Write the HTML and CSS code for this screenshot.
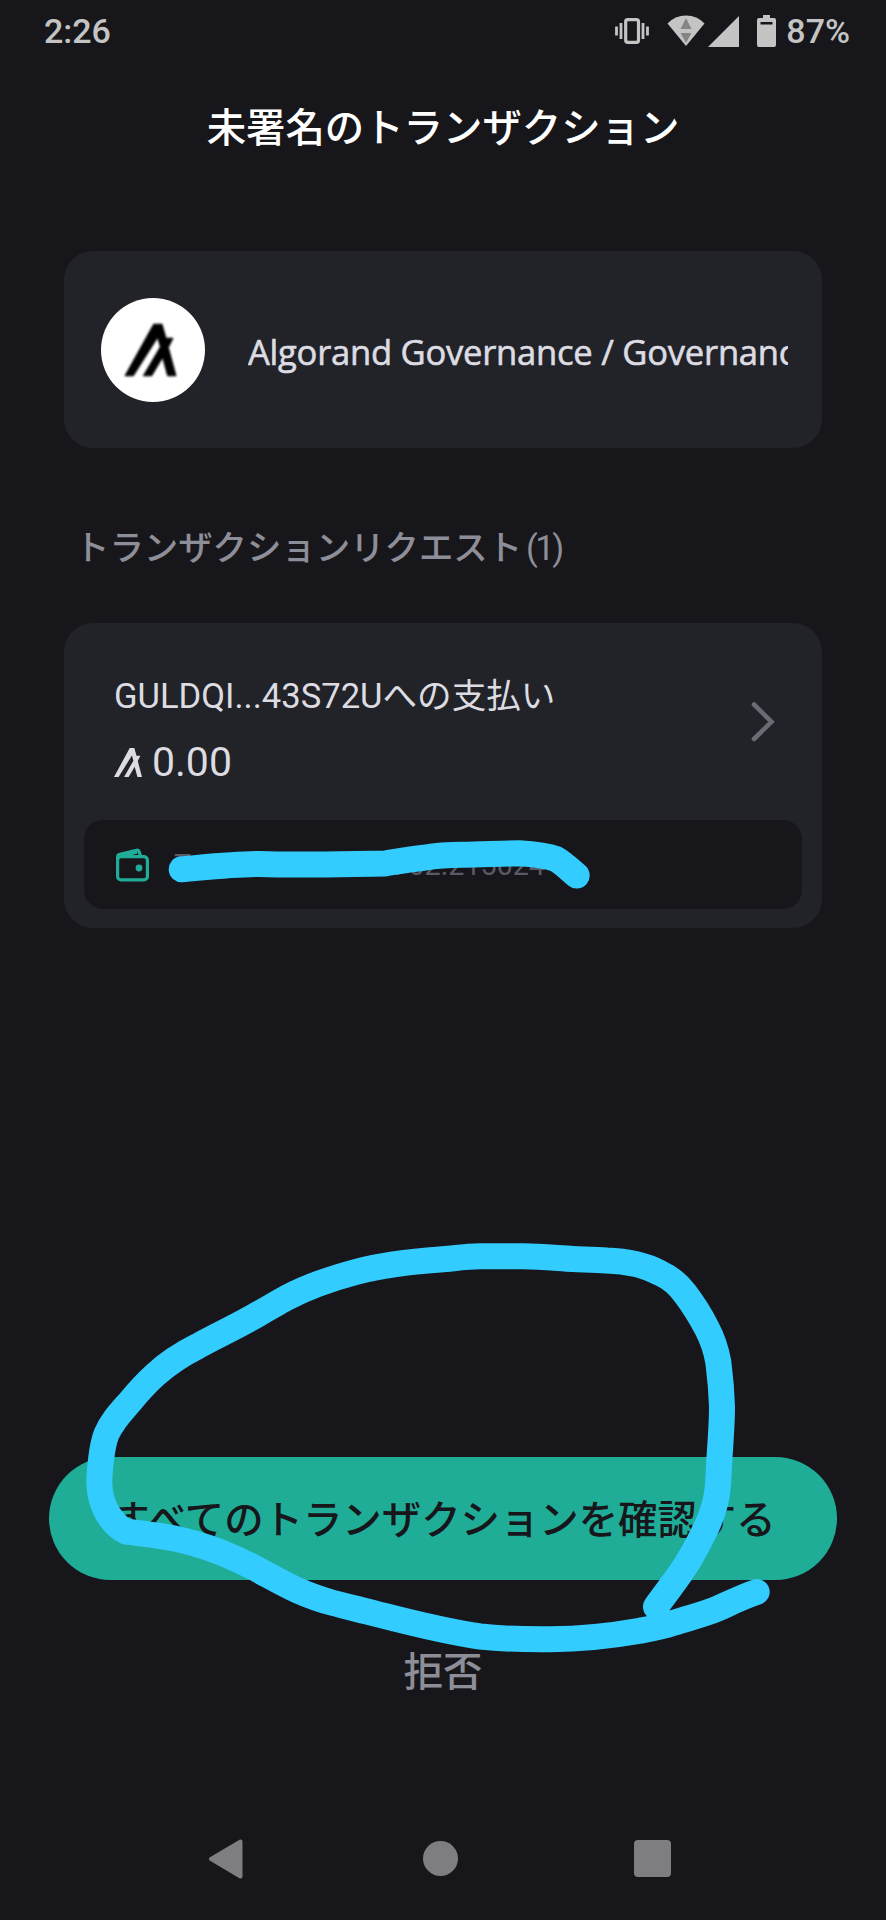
FILE: index.html
```html
<!DOCTYPE html>
<html lang="ja">
<head>
<meta charset="UTF-8" />
<meta name="viewport" content="width=device-width, initial-scale=1" />
<title>未署名のトランザクション</title>
<link rel="stylesheet" href="styles.css">
</head>
<body>
  <div class="status-bar">
    <span>2:26</span>
    <div class="status-icons">
      <svg class="icon-vibrate" width="34" height="26" viewBox="0 0 34 26">
        <path d="M1.5 8.500v9M6 5v16M28 5v16M32.500 8.500v9" stroke="#c4c4c4" stroke-width="2.800"/>
        <rect x="10.700" y="1.700" width="12.800" height="22.600" rx="2" fill="none" stroke="#c4c4c4" stroke-width="3.200"/>
      </svg>
      <svg class="icon-wifi" width="38" height="32" viewBox="0 0 38 32">
        <path d="M.5 8.500Q8 .5 19 .5T37.500 8.500L19 31z" fill="#c4c4c4"/>
        <path d="M19 3l5.500 11h-11zM13.500 18h11L19 28z" fill="#858585"/>
      </svg>
      <svg class="icon-signal" width="31" height="31" viewBox="0 0 31 31">
        <path d="M0 31L31 0v31z" fill="#c4c4c4"/>
      </svg>
      <svg class="icon-battery" width="19" height="32" viewBox="0 0 19 32">
        <path d="M6 0h7v3h4a2 2 0 0 1 2 2v25a2 2 0 0 1-2 2H2a2 2 0 0 1-2-2V5a2 2 0 0 1 2-2h4z" fill="#c4c4c4"/>
        <path d="M3.500 7h12v2.500h-12z" fill="#17171b"/>
      </svg>
      <span>87%</span>
    </div>
  </div>

  <h1 class="title">未署名のトランザクション</h1>

  <main class="content">
    <div class="dapp-card">
      <div class="dapp-logo">
        <svg width="51" height="52" viewBox="0 0 153 155">
          <path d="M86 0h25l12 42h21l-14 28 23 85h-25l-15-55-33 55h-25l51-87-8-28-73 115H0z" stroke="#000" stroke-width="3"/>
        </svg>
      </div>
      <div class="dapp-name">Algorand Governance / Governance</div>
    </div>

    <h2 class="section-title">トランザクションリクエスト<span class="count">(1)</span></h2>

    <div class="tx-card">
      <div class="tx-main">
        <div class="tx-info">
          <div class="tx-title">GULDQI...43S72Uへの支払い</div>
          <div class="tx-amount">
            <svg width="28" height="29" viewBox="0 0 153 155" preserveAspectRatio="none">
              <path d="M86 0h25l12 42h21l-14 28 23 85h-25l-15-55-33 55h-25l51-87-8-28-73 115H0z" fill="#dcdce2"/>
            </svg>
            <span>0.00</span>
          </div>
        </div>
        <svg class="chevron" width="24" height="42" viewBox="0 0 24 42">
          <path d="M3 3.500l17.500 17.300L3 38" fill="none" stroke="#6b6b76" stroke-width="4.600" stroke-linecap="round"/>
        </svg>
      </div>
      <div class="account">
        <svg width="34" height="34" viewBox="0 0 34 34" fill="none" stroke="#1fad98" stroke-width="3.200">
          <rect x="2.600" y="8.600" width="29.800" height="23.300" rx="3.500"/>
          <path d="M2.600 11V8.500q0-1.500 1.500-2L21.500 2.300q2-.6 2.700 1.400l1.300 4.500M8 8l14-4"/>
          <circle cx="24" cy="20" r="3.400" fill="#1fad98" stroke="none"/>
        </svg>
        <div class="account-text">
          <span>T</span>
          <span>702.215024</span>
        </div>
      </div>
    </div>
  </main>

  <div class="actions">
    <button class="btn-confirm">すべてのトランザクションを確認する</button>
    <button class="btn-reject">拒否</button>
  </div>

  <div class="nav-bar">
    <svg width="36" height="40" viewBox="0 0 36 40">
      <path d="M3 20L32.500 2.500v35z" fill="#7e7e80" stroke="#7e7e80" stroke-width="4" stroke-linejoin="round"/>
    </svg>
    <div class="nav-home"></div>
    <div class="nav-recent"></div>
  </div>

  <!-- marker strokes -->
  <svg class="marker" width="886" height="1920" viewBox="0 0 886 1920">
    <path d="M181.700 869.300C208 867 234 864 260 864C300 865.500 345 864 385 863.500C400 861 410 859 424 857.700C437 855.500 449 854.700 462 854.700C481 854.700 500 853.300 519 853.300C531 854 545 855 556 859C563 863 569 869 576.700 875.500"/>
    <path d="M656 1606.700C667 1591 679 1577 688 1561.700C696 1549 701 1538 706.700 1526.700C712 1515 716 1503 717.500 1490C718.500 1480 718.700 1470 719.300 1460C720.500 1442 722 1424 722 1406.700C721.500 1391 720 1375 718.300 1362C716 1349 712 1338 706.700 1328C700 1315 693 1304 685 1293.500C678 1284 671 1278 660 1273C644 1264.500 626 1261 606.700 1260.500C595 1259.500 584 1259.500 573 1259C556 1258 540 1256.300 523 1256.300H480C466 1256.500 453 1258.500 440 1259.500C412 1261.500 384 1264.500 356.700 1271.700C333 1278 309 1286 286.700 1297.700C277 1303 269 1308 260 1313C238 1326 216 1336 198 1346C180 1355 167 1364 155 1375C145 1384 138 1392 130 1401.700C121 1412 112 1421 106.500 1434C103 1443 102 1451 101 1460C100 1468 99.300 1475 99.300 1483C99.500 1494 102 1503 106.700 1511.700C112 1521 118 1528 126.700 1531.700C142 1533.500 158 1535.500 173.300 1538.300C189 1541.500 204 1546 220 1552C231 1556.500 242 1561.500 253.300 1567.300C268 1575 282 1583 296.700 1590C308 1595 320 1599.500 333.300 1603C348 1607 362 1610 376.700 1614C410 1622.500 444 1631.500 480 1636.500C503 1639 527 1639.500 550 1639.300C580 1639 610 1636 640 1630.700C652 1628.500 663 1626.500 673 1623C688 1618 702 1615 716.700 1609C730 1603 743 1596.500 756.700 1592"/>
  </svg>
</body>
</html>
```
FILE: styles.css
```css
* {
  margin: 0; padding: 0; box-sizing: border-box;
}
body {
  position: relative;
  width: 886px;
  height: 1920px;
  overflow: hidden;
  display: flex;
  flex-direction: column;
  background: #17171b;
  color: #dcdce2;
  font-family: Roboto, "Noto Sans CJK JP", sans-serif;
}
svg {
  display: block;
  flex-shrink: 0;
}
.status-bar {
  height: 62px;
  padding: 0 36px 0 44px;
  display: flex;
  justify-content: space-between;
  align-items: center;
  font-size: 34px;
  font-weight: 500;
  line-height: 62px;
  color: #c4c4c4;
}
.status-icons {
  display: flex;
  align-items: center;
}
.icon-wifi {
  margin-left: 18px;
}
.icon-signal {
  margin-left: 3px;
}
.icon-battery {
  margin-left: 18px;
  margin-right: 10px;
}
.title {
  height: 130px;
  text-align: center;
  color: #fff;
  font-family: "Noto Sans CJK JP", sans-serif;
  font-size: 39.4px;
  font-weight: 500;
  line-height: 126px;
}
.content {
  padding: 59px 64px 0;
}
.dapp-card {
  height: 197px;
  padding: 0 34px 0 37px;
  display: flex;
  align-items: center;
  gap: 43px;
  background: #222328;
  border-radius: 29px;
}
.dapp-logo {
  width: 104px;
  height: 104px;
  padding-right: 6px;
  flex-shrink: 0;
  display: flex;
  align-items: center;
  justify-content: center;
  background: #fff;
  border-radius: 50%;
}
.dapp-logo svg {
  overflow: visible;
  filter: blur(1.2px);
}
.dapp-name {
  flex: 1;
  overflow: hidden;
  white-space: nowrap;
  font-family: "Open Sans", sans-serif;
  font-size: 34.6px;
  font-weight: 500;
  letter-spacing: -0.25px;
  line-height: 60px;
  padding-top: 4px;
  -webkit-text-stroke: 0.6px #dcdce2;
}
.section-title {
  height: 175px;
  padding: 0 11px;
  color: #8e8e98;
  font-family: "Noto Sans CJK JP", sans-serif;
  font-size: 34.4px;
  font-weight: 500;
  line-height: 195px;
}
.section-title .count {
  margin-left: 4px;
  font-family: Roboto, sans-serif;
  font-weight: 400;
  letter-spacing: -2.5px;
}
.tx-card {
  height: 305px;
  padding: 0 20px 19px;
  display: flex;
  flex-direction: column;
  background: #222328;
  border-radius: 29px;
}
.tx-main {
  flex: 1;
  padding: 0 27px 0 30px;
  display: flex;
  justify-content: space-between;
  align-items: center;
}
.tx-info {
  padding-top: 15px;
}
.tx-title {
  font-size: 34.6px;
  line-height: 50px;
}
.tx-amount {
  display: flex;
  align-items: center;
  gap: 10px;
  margin-top: 16px;
  font-size: 41px;
  line-height: 50px;
}
.account {
  height: 89px;
  padding-left: 31px;
  display: flex;
  align-items: center;
  gap: 25px;
  background: #17171b;
  border-radius: 19px;
}
.account-text {
  width: 371px;
  display: flex;
  justify-content: space-between;
  color: #5a5964;
  font-size: 28.7px;
}
.actions {
  margin-top: auto;
  padding: 0 49px;
  display: flex;
  flex-direction: column;
}
.actions button {
  border: none;
  font-family: "Noto Sans CJK JP", sans-serif;
  font-size: 39.4px;
  font-weight: 500;
}
.btn-confirm {
  height: 123px;
  padding-bottom: 4px;
  background: #1fad98;
  color: #17171b;
  border-radius: 62px;
}
.actions .btn-reject {
  height: 183px;
  padding-bottom: 6px;
  background: none;
  color: #8e8e98;
}
.nav-bar {
  height: 157px;
  padding: 34px 215px 0 208px;
  display: flex;
  justify-content: space-between;
  align-items: center;
}
.nav-home {
  width: 35px;
  height: 35px;
  margin-left: 2px;
  background: #7e7e80;
  border-radius: 50%;
}
.nav-recent {
  width: 37px;
  height: 37px;
  background: #7e7e80;
  border-radius: 4px;
}
.marker {
  position: absolute;
  top: 0;
  left: 0;
  fill: none;
  stroke: #33ccff;
  stroke-width: 26px;
  stroke-linecap: round;
  stroke-linejoin: round;
  pointer-events: none;
}
```
